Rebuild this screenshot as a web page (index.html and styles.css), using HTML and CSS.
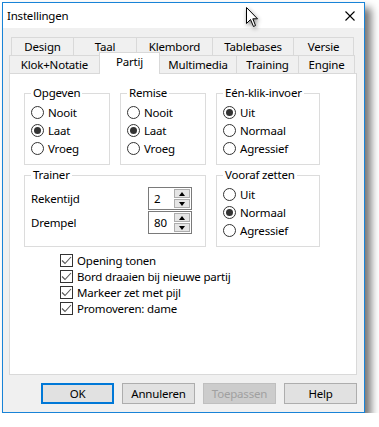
FILE: index.html
```html
<!DOCTYPE html>
<html>
<head>
<meta charset="utf-8">
<title>Instellingen</title>
<link rel="stylesheet" href="styles.css">
</head>
<body>
<div class="window">
  <div class="titlebar">
    <span class="title">Instellingen</span>
    <svg class="close" width="10" height="10" viewBox="0 0 10 10"><path d="M0.5 0.5 L9.5 9.5 M9.5 0.5 L0.5 9.5" stroke="#000" stroke-width="1.1" fill="none"/></svg>
  </div>
  <div class="client">
    <div class="tabs">
      <div class="tabrow back">
        <div class="tab" style="width:63px">Design</div>
        <div class="tab" style="width:64px">Taal</div>
        <div class="tab" style="width:77px">Klembord</div>
        <div class="tab" style="width:82px">Tablebases</div>
        <div class="tab" style="width:61px">Versie</div>
      </div>
      <div class="tabrow front">
        <div class="tab" style="width:91px">Klok+Notatie</div>
        <div class="tab selected" style="width:61px">Partij</div>
        <div class="tab" style="width:78px">Multimedia</div>
        <div class="tab" style="width:63px">Training</div>
        <div class="tab" style="width:57px">Engine</div>
      </div>
    </div>

    <div class="panel">
      <div class="groups">
        <fieldset class="group">
          <legend>Opgeven</legend>
          <div class="opt"><span class="radio"></span>Nooit</div>
          <div class="opt"><span class="radio on"></span>Laat</div>
          <div class="opt"><span class="radio"></span>Vroeg</div>
        </fieldset>
        <fieldset class="group">
          <legend>Remise</legend>
          <div class="opt"><span class="radio"></span>Nooit</div>
          <div class="opt"><span class="radio on"></span>Laat</div>
          <div class="opt"><span class="radio"></span>Vroeg</div>
        </fieldset>
        <fieldset class="group">
          <legend>Eén-klik-invoer</legend>
          <div class="opt"><span class="radio on"></span>Uit</div>
          <div class="opt"><span class="radio"></span>Normaal</div>
          <div class="opt"><span class="radio"></span>Agressief</div>
        </fieldset>

        <fieldset class="group trainer">
          <legend>Trainer</legend>
          <div class="field">
            <span class="label">Rekentijd</span>
            <div class="spin">
              <span class="spin-edit">2</span>
              <span class="spin-btns"><span class="up"></span><span class="down"></span></span>
            </div>
          </div>
          <div class="field">
            <span class="label">Drempel</span>
            <div class="spin">
              <span class="spin-edit">80</span>
              <span class="spin-btns"><span class="up"></span><span class="down"></span></span>
            </div>
          </div>
        </fieldset>
        <fieldset class="group">
          <legend>Vooraf zetten</legend>
          <div class="opt"><span class="radio"></span>Uit</div>
          <div class="opt"><span class="radio on"></span>Normaal</div>
          <div class="opt"><span class="radio"></span>Agressief</div>
        </fieldset>
      </div>

      <div class="checks">
        <div class="check"><span class="box"><svg width="11" height="11" viewBox="0 0 11 11"><path d="M1 5.5 L4 8.5 L10 2" stroke="#555" stroke-width="1.1" fill="none"/></svg></span>Opening tonen</div>
        <div class="check"><span class="box"><svg width="11" height="11" viewBox="0 0 11 11"><path d="M1 5.5 L4 8.5 L10 2" stroke="#555" stroke-width="1.1" fill="none"/></svg></span>Bord draaien bij nieuwe partij</div>
        <div class="check"><span class="box"><svg width="11" height="11" viewBox="0 0 11 11"><path d="M1 5.5 L4 8.5 L10 2" stroke="#555" stroke-width="1.1" fill="none"/></svg></span>Markeer zet met pijl</div>
        <div class="check"><span class="box"><svg width="11" height="11" viewBox="0 0 11 11"><path d="M1 5.5 L4 8.5 L10 2" stroke="#555" stroke-width="1.1" fill="none"/></svg></span>Promoveren: dame</div>
      </div>
    </div>

    <div class="buttons">
      <div class="btn default">OK</div>
      <div class="btn">Annuleren</div>
      <div class="btn disabled">Toepassen</div>
      <div class="btn">Help</div>
    </div>
  </div>
</div>

<svg class="cursor" width="14" height="22" viewBox="0 0 14 22">
  <path d="M0.5 0.5 L0.5 16.5 L4.5 12.5 L7.5 19.5 L9.5 18.5 L6.8 11.8 L11.5 11.8 Z" fill="#fff" stroke="#000" stroke-width="1"/>
</svg>
</body>
</html>
```

FILE: styles.css
```css
body{margin:0;background:#fff;font-family:"Noto Sans","Open Sans",sans-serif;font-size:11.5px;letter-spacing:-0.2px;color:#000;}

.window{width:363px;height:411px;margin:2px 0 0 2px;box-sizing:border-box;border:1px solid #1883d7;background:#f0f0f0;box-shadow:6px 6px 8px rgba(0,0,0,0.55);}

.titlebar{height:25px;background:#fff;display:flex;align-items:center;padding-left:4px;}
.close{margin-left:auto;margin-right:9px;}

.client{padding:9px 7px 0 6px;}

.tabrow{display:flex;height:18px;align-items:flex-end;}
.tabrow.back{margin-left:2px;}
.tab{box-sizing:border-box;height:18px;border:1px solid #d9d9d9;border-bottom:none;margin-left:-1px;text-align:center;line-height:17px;background:#f0f0f0;}
.tab:first-child{margin-left:0;}
.tab.selected{height:22px;margin-bottom:-1px;background:#fff;position:relative;z-index:1;line-height:17px;}

.panel{box-sizing:border-box;height:302px;border:1px solid #d9d9d9;background:#fff;padding:11px 0 0 14px;}

.groups{display:grid;grid-template-columns:86px 86px 104px;column-gap:10px;row-gap:2px;}
.group{margin:0;min-width:0;border:1px solid #dcdcdc;padding:2px 6px 7px;}
.group legend{padding:0 2px;line-height:16px;}
.trainer{grid-column:span 2;padding-top:4px;}

.opt{display:flex;align-items:center;height:18px;}
.radio{box-sizing:border-box;width:13px;height:13px;border:1px solid #333;border-radius:50%;margin-right:4px;display:flex;align-items:center;justify-content:center;background:#fff;}
.radio.on::after{content:"";width:7px;height:7px;border-radius:50%;background:#333;}

.field{display:flex;align-items:center;height:23px;margin-bottom:1px;}
.label{width:117px;}
.spin{display:flex;height:23px;}
.spin-edit{box-sizing:border-box;width:26px;border:1px solid #7a7a7a;border-right:none;padding-left:5px;line-height:21px;background:#fff;}
.spin-btns{box-sizing:border-box;width:18px;display:flex;flex-direction:column;gap:1px;border:1px solid #7a7a7a;border-left:none;padding:1px 1px 1px 0;background:#fff;}
.spin-btns span{flex:1;box-sizing:border-box;border:1px solid #adadad;background:#e5e5e5;display:flex;align-items:center;justify-content:center;}
.spin-btns .up::after{content:"";border-left:3.5px solid transparent;border-right:3.5px solid transparent;border-bottom:4px solid #000;}
.spin-btns .down::after{content:"";border-left:3.5px solid transparent;border-right:3.5px solid transparent;border-top:4px solid #000;}

.checks{margin:5px 0 0 36px;}
.check{display:flex;align-items:center;height:16px;}
.box{box-sizing:border-box;width:13px;height:13px;border:1px solid #333;margin-right:4px;display:flex;align-items:center;justify-content:center;background:#fff;}

.buttons{display:flex;justify-content:flex-end;gap:8px;margin-top:8px;}
.btn{box-sizing:border-box;width:73px;height:21px;border:1px solid #adadad;background:#e1e1e1;text-align:center;line-height:19px;}
.btn.default{border:2px solid #0078d7;line-height:17px;}
.btn.disabled{background:#cccccc;border-color:#bfbfbf;color:#a0a0a0;}

.cursor{position:absolute;left:246px;top:7px;filter:drop-shadow(1px 2px 2px rgba(0,0,0,0.45));}
```
